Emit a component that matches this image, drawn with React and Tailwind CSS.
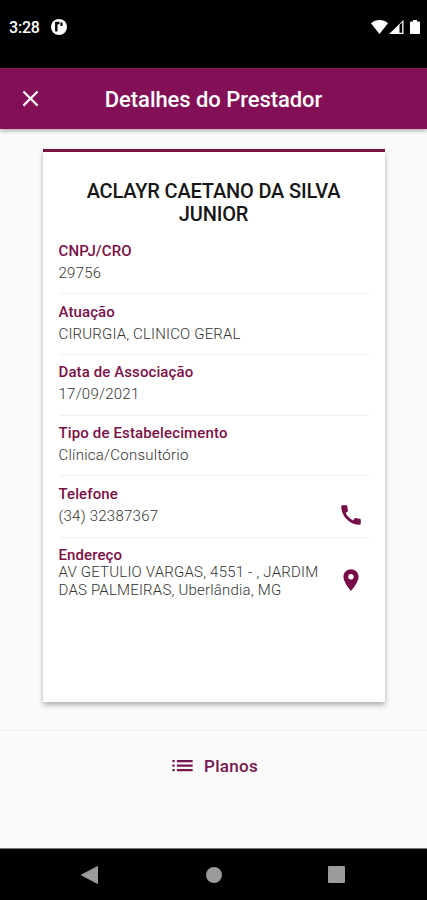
import { MdCall, MdClose, MdList, MdLocationOn } from 'react-icons/md';

const FIELDS = [
  { label: 'CNPJ/CRO', value: '29756', rowClass: 'h-[61px] pt-[7px]', labelClass: 'tracking-[0.1px]', valueClass: 'tracking-[0.25px]' },
  { label: 'Atuação', value: 'CIRURGIA, CLINICO GERAL', rowClass: 'h-[61px] pt-[7px]', labelClass: 'tracking-[0.1px]', valueClass: 'tracking-[0.16px]' },
  { label: 'Data de Associação', value: '17/09/2021', rowClass: 'h-[61px] pt-[6px]', labelClass: 'tracking-[0.1px]', valueClass: 'tracking-[0.25px]' },
  { label: 'Tipo de Estabelecimento', value: 'Clínica/Consultório', rowClass: 'h-[60px] pt-[6px]', labelClass: 'tracking-[0.14px]', valueClass: 'tracking-[0.25px]' },
  { label: 'Telefone', value: '(34) 32387367', rowClass: 'h-[62px] pt-[7px]', labelClass: 'tracking-[0.1px]', valueClass: 'tracking-[0.25px]', icon: MdCall },
];

function StatusBar() {
  return (
    <div className="h-[68px] bg-black text-white flex items-start justify-between pt-[19px] pl-[9px] pr-[7px]">
      <div className="flex items-start gap-[11px] h-4">
        <span className="text-[16px] leading-4 font-medium tracking-[-0.2px] pt-px">3:28</span>
        <svg width="16" height="16" viewBox="0 0 16 16">
          <circle cx="8" cy="8" r="8" fill="#fff" />
          <path d="M5.300 12.500V4H8.500" fill="none" stroke="#000" strokeWidth="2.400" />
          <path d="M9.500 3.500H11.500V7H9.500Z" fill="#000" />
        </svg>
      </div>
      <div className="flex items-start pt-px">
        <svg width="17" height="14" viewBox="0 0 17 14">
          <path d="M0 3.2C5-1 12-1 17 3.2L8.500 14Z" fill="#fff" />
        </svg>
        <svg width="15" height="14" viewBox="0 0 15 14" className="ml-px">
          <path d="M0 14L14.500 0V14ZM10.500 5V12.700H13.200V2.300Z" fill="#fff" fillRule="evenodd" />
        </svg>
        <svg width="10" height="14" viewBox="0 0 10 14" className="ml-[6px]">
          <path d="M3 0H7V1.500H9Q10 1.500 10 2.500V13Q10 14 9 14H1Q0 14 0 13V2.500Q0 1.500 1 1.500H3Z" fill="#fff" />
        </svg>
      </div>
    </div>
  );
}

function NavBar() {
  return (
    <div className="h-[52px] bg-black border-t border-[#777] flex items-center justify-center gap-[106px]">
      <svg width="17" height="18" viewBox="0 0 17 18" className="relative -left-0.5">
        <path d="M16.500 0.500V17.500L0.500 9Z" fill="#9b9b9b" stroke="#9b9b9b" strokeLinejoin="round" />
      </svg>
      <div className="size-4 rounded-full bg-[#9b9b9b]" />
      <div className="size-[17px] rounded-[1px] bg-[#9b9b9b]" />
    </div>
  );
}

export default function App() {
  return (
    <div className="h-[900px] w-full flex flex-col bg-[#fafafa] font-['Roboto',sans-serif] overflow-hidden">
      <StatusBar />

      <header className="relative h-[61px] shrink-0 bg-[#830f56] text-white flex items-center justify-center shadow-[0_2px_4px_rgba(0,0,0,0.3)]">
        <MdClose className="absolute left-[17px] top-[17px] size-[27px]" />
        <h1 className="text-[22px] leading-none font-medium tracking-[-0.06px] pt-[2px]">Detalhes do Prestador</h1>
      </header>

      <main className="flex-1 flex flex-col pt-[20px]">
        {/* Provider card */}
        <section className="mx-auto w-[342px] h-[553px] bg-white border-t-[3px] border-[#761641] px-4 shadow-[0_3px_5px_rgba(0,0,0,0.3)]">
          <h2 className="pt-[28px] text-center text-[20px] leading-[23px] font-medium text-[#161616] tracking-[-0.17px]">
            ACLAYR CAETANO DA SILVA
            <br />
            JUNIOR
          </h2>

          <div className="pt-[7px]">
            {FIELDS.map(({ label, value, rowClass, labelClass, valueClass, icon: Icon }) => (
              <div key={label} className={`border-b border-[#f0f0f0] flex justify-between pr-[5px] ${rowClass}`}>
                <div>
                  <p className={`text-[15px] leading-[22px] font-medium text-[#7b1048] ${labelClass}`}>{label}</p>
                  <p className={`text-[15px] leading-[22px] font-light text-[#333] ${valueClass}`}>{value}</p>
                </div>
                {Icon && <Icon className="size-[26px] mt-[19px] text-[#770b48]" />}
              </div>
            ))}

            <div className="flex justify-between pt-[8px] pr-[5px]">
              <div>
                <p className="text-[15px] leading-[18px] font-medium text-[#7b1048] tracking-[0.1px]">Endereço</p>
                <p className="text-[15px] leading-[17.500px] font-light text-[#333] tracking-[0.2px] whitespace-nowrap">
                  AV GETULIO VARGAS, 4551 - , JARDIM
                  <br />
                  DAS PALMEIRAS, Uberlândia, MG
                </p>
              </div>
              <MdLocationOn className="size-[26px] mt-[21px] text-[#770b48]" />
            </div>
          </div>
        </section>

        <div className="mt-[28px] border-t border-[#eee] pt-[21px] flex items-center justify-center gap-2 text-[#76164e]">
          <MdList className="size-[27px]" />
          <span className="text-[17px] leading-6 font-medium tracking-[0.3px]">Planos</span>
        </div>
      </main>

      <NavBar />
    </div>
  );
}
